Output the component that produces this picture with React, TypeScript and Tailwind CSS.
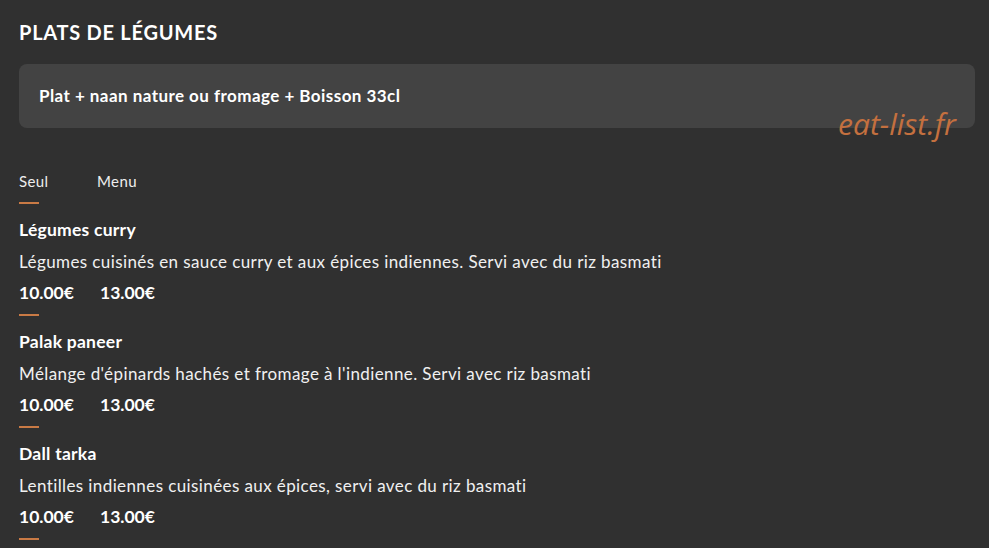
import React from "react";

type Dish = {
  name: string;
  description: string;
  seul: string;
  menu: string;
};

const dishes: Dish[] = [
  {
    name: "Légumes curry",
    description:
      "Légumes cuisinés en sauce curry et aux épices indiennes. Servi avec du riz basmati",
    seul: "10.00€",
    menu: "13.00€",
  },
  {
    name: "Palak paneer",
    description:
      "Mélange d'épinards hachés et fromage à l'indienne. Servi avec riz basmati",
    seul: "10.00€",
    menu: "13.00€",
  },
  {
    name: "Dall tarka",
    description:
      "Lentilles indiennes cuisinées aux épices, servi avec du riz basmati",
    seul: "10.00€",
    menu: "13.00€",
  },
];

function Divider() {
  return <div className="h-[2px] w-5 bg-[#c97a45]" />;
}

function DishRow({ dish }: { dish: Dish }) {
  return (
    <div className="flex flex-col">
      <h3 className="text-[17.5px] font-bold leading-6 mt-[14px] tracking-[0.25px]">{dish.name}</h3>
      <p className="text-[17px] leading-6 mt-2 tracking-[0.4px] text-[#f0f0f0]">
        {dish.description}
      </p>
      <div className="flex mt-[7px] text-[17.5px] font-bold leading-6">
        <span className="w-[81px]">{dish.seul}</span>
        <span>{dish.menu}</span>
      </div>
      <div className="mt-[9px]">
        <Divider />
      </div>
    </div>
  );
}

export default function App() {
  return (
    <div
      className="relative w-[989px] h-[548px] overflow-hidden bg-[#303030] text-white px-[19px] pt-5"
      style={{ fontFamily: "Lato, 'Open Sans', sans-serif" }}
    >
      <h2 className="text-[20px] font-bold leading-6 tracking-[0.75px]">PLATS DE LÉGUMES</h2>

      <div className="mt-5 w-[956px] h-16 rounded-lg bg-[#434343] flex items-center px-5">
        <span className="text-[17px] font-bold tracking-[0.45px]">
          Plat + naan nature ou fromage + Boisson 33cl
        </span>
      </div>

      <div className="mt-[43px] flex text-[15px] leading-5 tracking-[0.4px] text-[#eeeeee]">
        <span className="w-[78px]">Seul</span>
        <span>Menu</span>
      </div>
      <div className="mt-[11px]">
        <Divider />
      </div>

      {dishes.map((d) => (
        <DishRow key={d.name} dish={d} />
      ))}

      {/* watermark */}
      <span
        className="absolute left-[838px] top-[101px] text-[30px] italic text-[#c4703f]"
        style={{ fontFamily: "'Open Sans', sans-serif" }}
      >
        eat-list.fr
      </span>
    </div>
  );
}
